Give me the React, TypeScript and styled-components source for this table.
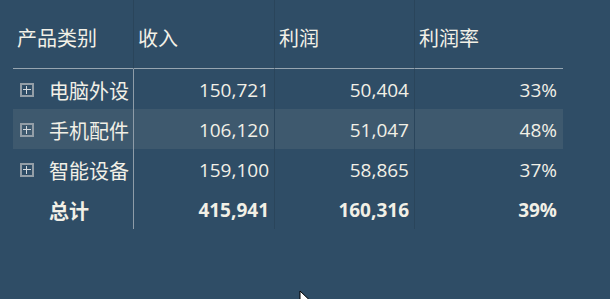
import React from 'react';
import styled, { createGlobalStyle } from 'styled-components';

const GlobalStyle = createGlobalStyle`
  html, body {
    margin: 0;
    padding: 0;
    background: #2f4d66;
  }
  body {
    width: 610px;
    height: 299px;
    overflow: hidden;
    font-family: 'Open Sans', 'Noto Sans CJK SC', sans-serif;
    color: #f2f0e6;
  }
`;

const Page = styled.div`
  position: relative;
  width: 610px;
  height: 299px;
  padding-left: 13px;
  box-sizing: border-box;
`;

const Table = styled.div`
  display: grid;
  grid-template-columns: 121px 141px 140px 148px;
`;

const HeaderCell = styled.div<{ $last?: boolean }>`
  height: 69px;
  padding: 6px 0 0 4px;
  box-sizing: border-box;
  display: flex;
  align-items: center;
  font-size: 20px;
  border-bottom: 1px solid #97a5b0;
  border-right: ${(p) => (p.$last ? 'none' : '1px solid #2a455b')};
`;

const Row = styled.div<{ $highlight?: boolean }>`
  display: contents;
  & > div {
    background: ${(p) => (p.$highlight ? '#3e596e' : 'transparent')};
  }
`;

const NameCell = styled.div<{ $bold?: boolean }>`
  height: 40px;
  display: flex;
  align-items: center;
  gap: 15px;
  padding-left: ${(p) => (p.$bold ? '36px' : '7px')};
  padding-top: 2px;
  box-sizing: border-box;
  font-size: 20px;
  font-weight: ${(p) => (p.$bold ? 700 : 400)};
  border-right: 1px solid #8e9ca8;
`;

const NumCell = styled.div<{ $bold?: boolean; $last?: boolean }>`
  height: 40px;
  display: flex;
  align-items: center;
  justify-content: flex-end;
  padding-right: ${(p) => (p.$last ? '6px' : '5px')};
  padding-top: 2px;
  box-sizing: border-box;
  font-size: 19px;
  font-weight: ${(p) => (p.$bold ? 700 : 400)};
  border-right: ${(p) => (p.$last ? 'none' : '1px solid #2a455b')};
`;

const Expander = styled.span`
  width: 14px;
  height: 14px;
  flex: none;
  box-sizing: border-box;
  border: 2px solid #939ea7;
  position: relative;
  &::before,
  &::after {
    content: '';
    position: absolute;
    background: #d4d8dc;
  }
  &::before {
    left: 1px;
    right: 1px;
    top: 4px;
    height: 1px;
  }
  &::after {
    top: 1px;
    bottom: 1px;
    left: 4px;
    width: 1px;
  }
`;

const Cursor = styled.svg`
  position: absolute;
  left: 299px;
  top: 290px;
`;

type Item = { name: string; income: string; profit: string; rate: string };

const items: Item[] = [
  { name: '电脑外设', income: '150,721', profit: '50,404', rate: '33%' },
  { name: '手机配件', income: '106,120', profit: '51,047', rate: '48%' },
  { name: '智能设备', income: '159,100', profit: '58,865', rate: '37%' },
];

const App: React.FC = () => {
  return (
    <Page>
      <GlobalStyle />
      <Table>
        <HeaderCell>产品类别</HeaderCell>
        <HeaderCell>收入</HeaderCell>
        <HeaderCell>利润</HeaderCell>
        <HeaderCell $last>利润率</HeaderCell>

        {items.map((it, i) => (
          <Row key={it.name} $highlight={i === 1}>
            <NameCell>
              <Expander />
              {it.name}
            </NameCell>
            <NumCell>{it.income}</NumCell>
            <NumCell>{it.profit}</NumCell>
            <NumCell $last>{it.rate}</NumCell>
          </Row>
        ))}

        <Row>
          <NameCell $bold>总计</NameCell>
          <NumCell $bold>415,941</NumCell>
          <NumCell $bold>160,316</NumCell>
          <NumCell $bold $last>39%</NumCell>
        </Row>
      </Table>
      <Cursor width="12" height="18" viewBox="0 0 12 18">
        <path d="M1 1 L1 15 L4.5 11.5 L7 17 L9 16 L6.5 10.5 L11 10.5 Z" fill="#ffffff" stroke="#000000" strokeWidth="1" />
      </Cursor>
    </Page>
  );
};

export default App;
